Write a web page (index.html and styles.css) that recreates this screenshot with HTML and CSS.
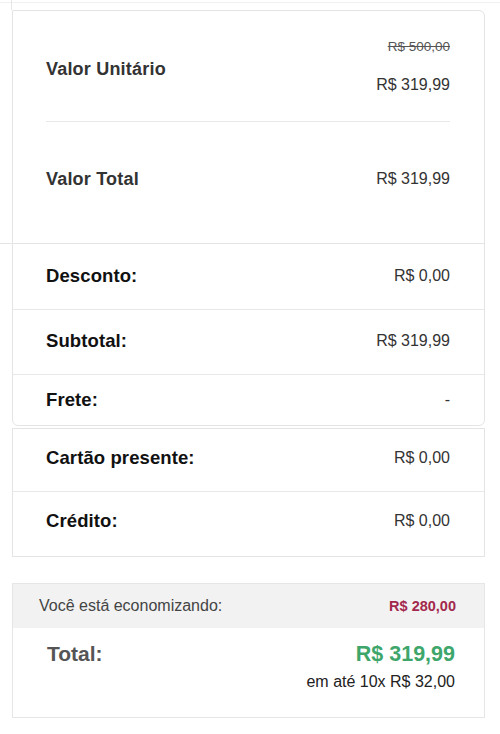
FILE: index.html
```html
<!DOCTYPE html>
<html>
<head>
    <title>Resumo do pedido</title>
    <link rel="stylesheet" href="styles.css">
</head>
<body>
    <div class="top-edge"><div class="top-stub"></div></div>

    <section class="card card-main">
        <div class="price-block">
            <div class="price-row price-row-unit">
                <span class="price-label price-label-unit">Valor Unitário</span>
                <div class="price-values">
                    <s class="price-old">R$ 500,00</s>
                    <span class="price-now">R$ 319,99</span>
                </div>
            </div>
            <div class="price-row price-row-total">
                <span class="price-label">Valor Total</span>
                <span class="price-now">R$ 319,99</span>
            </div>
        </div>
        <div class="summary-rows">
            <div class="summary-row row-discount">
                <span class="summary-label">Desconto:</span>
                <span class="summary-value">R$ 0,00</span>
            </div>
            <div class="summary-row row-subtotal">
                <span class="summary-label">Subtotal:</span>
                <span class="summary-value">R$ 319,99</span>
            </div>
            <div class="summary-row row-shipping">
                <span class="summary-label">Frete:</span>
                <span class="summary-value">-</span>
            </div>
        </div>
    </section>

    <section class="card card-credits">
        <div class="summary-row row-gift">
            <span class="summary-label">Cartão presente:</span>
            <span class="summary-value">R$ 0,00</span>
        </div>
        <div class="summary-row row-credit">
            <span class="summary-label">Crédito:</span>
            <span class="summary-value">R$ 0,00</span>
        </div>
    </section>

    <section class="totals">
        <div class="totals-savings">
            <span>Você está economizando:</span>
            <span class="savings-value">R$ 280,00</span>
        </div>
        <div class="totals-body">
            <span class="totals-label">Total:</span>
            <div class="totals-values">
                <span class="totals-amount">R$ 319,99</span>
                <span class="totals-installments">em até 10x R$ 32,00</span>
            </div>
        </div>
    </section>
</body>
</html>
```

FILE: styles.css
```css
body {
    margin: 0;
    padding: 0;
    background-color: #fff;
    font-family: "Liberation Sans", Arial, sans-serif;
    color: #333;
}
.top-edge {
    height: 10px;
    background: linear-gradient(#fff 0 2px, #f1f1f1 2px 3px, #fff 3px);
}
.top-stub {
    height: 10px;
    margin-left: 11px;
    border-left: 1px solid #e6e6e6;
}
.card {
    margin-left: 12px;
    width: 471px;
    border: 1px solid #e4e4e4;
}
.card-main {
    border-radius: 0 6px 6px 6px;
}
.price-block {
    padding: 0 34px 0 33px;
}
.price-row {
    display: flex;
    justify-content: space-between;
    align-items: center;
}
.price-row-unit {
    height: 110px;
    border-bottom: 1px solid #e8e8e8;
}
.price-row-total {
    padding: 47px 0 54px;
    line-height: 20px;
}
.price-label {
    font-size: 18px;
    line-height: 20px;
    font-weight: bold;
    letter-spacing: 0.2px;
    color: #333;
}
.price-label-unit {
    padding-top: 6px;
}
.price-values {
    display: flex;
    flex-direction: column;
    align-items: flex-end;
}
.price-old {
    font-size: 13.5px;
    line-height: 16px;
    color: #555;
    margin-bottom: 22px;
}
.price-now {
    font-size: 16px;
    line-height: 16px;
    color: #333;
}
.summary-rows {
    margin-left: -13px;
    border-top: 1px solid #e4e4e4;
}
.card-credits .summary-row,
.summary-rows .summary-row {
    display: flex;
    justify-content: space-between;
    line-height: 20px;
    padding-left: 33px;
    padding-right: 34px;
}
.summary-rows .summary-row {
    margin-left: 13px;
}
.row-discount {
    padding-top: 22px;
    padding-bottom: 23px;
    border-bottom: 1px solid #e8e8e8;
}
.row-subtotal {
    padding-top: 21px;
    padding-bottom: 23px;
    border-bottom: 1px solid #e8e8e8;
}
.row-shipping {
    padding-top: 15px;
    padding-bottom: 15px;
}
.summary-label {
    font-size: 18.5px;
    font-weight: bold;
    letter-spacing: 0.1px;
    color: #111;
}
.summary-value {
    font-size: 16px;
    color: #333;
}
.card-credits {
    margin-top: 2px;
}
.row-gift {
    padding-top: 19px;
    padding-bottom: 23px;
    border-bottom: 1px solid #e8e8e8;
}
.row-credit {
    padding-top: 19px;
    padding-bottom: 25px;
}
.totals {
    margin: 26px 0 0 12px;
    width: 471px;
    border: 1px solid #e6e6e6;
}
.totals-savings {
    height: 44px;
    background-color: #f2f2f2;
    display: flex;
    justify-content: space-between;
    align-items: center;
    padding: 0 28px 0 26px;
    font-size: 16px;
    color: #444;
}
.savings-value {
    font-size: 14.5px;
    font-weight: bold;
    color: #a3284d;
}
.totals-body {
    display: flex;
    justify-content: space-between;
    align-items: flex-start;
    padding: 14px 29px 26px 34px;
}
.totals-label {
    font-size: 21px;
    line-height: 24px;
    font-weight: bold;
    color: #555;
}
.totals-values {
    display: flex;
    flex-direction: column;
    align-items: flex-end;
}
.totals-amount {
    font-size: 21.5px;
    line-height: 24px;
    font-weight: bold;
    color: #3ea66b;
}
.totals-installments {
    margin-top: 7px;
    font-size: 16px;
    line-height: 18px;
    color: #222;
}
```
